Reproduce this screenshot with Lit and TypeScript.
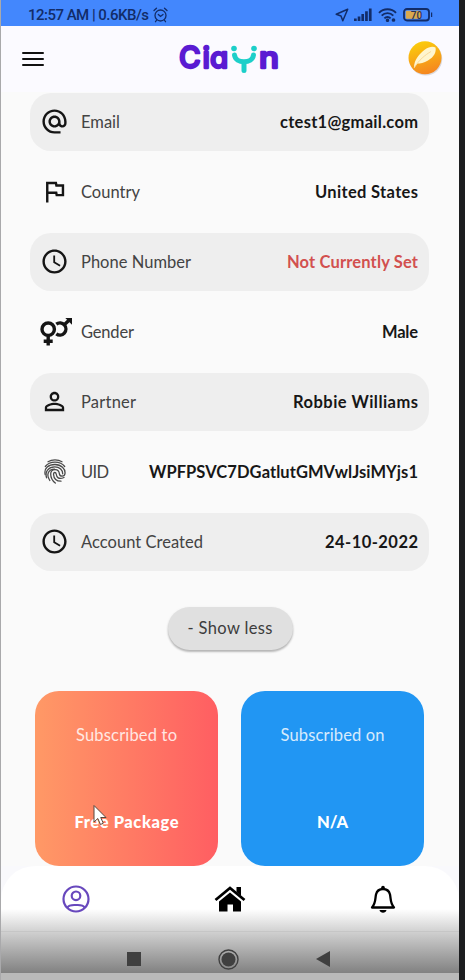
import { LitElement, html, css, svg } from "lit";
import { customElement } from "lit/decorators.js";

const icons: Record<string, unknown> = {
  at: svg`<svg class="row-icon" viewBox="0 0 24 24"><path d="M12 2C6.480 2 2 6.480 2 12s4.480 10 10 10h5v-2h-5c-4.340 0-8-3.660-8-8s3.660-8 8-8 8 3.660 8 8v1.430c0 .790-.710 1.570-1.500 1.570S17 14.220 17 13.430V12c0-2.760-2.240-5-5-5s-5 2.240-5 5 2.240 5 5 5c1.380 0 2.640-.560 3.540-1.470.650.890 1.770 1.470 2.960 1.470 1.970 0 3.500-1.600 3.500-3.570V12c0-5.520-4.480-10-10-10zm0 13c-1.660 0-3-1.340-3-3s1.340-3 3-3 3 1.340 3 3-1.340 3-3 3z"/></svg>`,
  flag: svg`<svg class="row-icon" viewBox="0 0 24 24"><path d="M12.360 6l.400 2H18v6h-3.360l-.400-2H7V6h5.360M14 4H5v17h2v-7h5.600l.400 2h7V6h-5.600L14 4z"/></svg>`,
  clock: svg`<svg class="row-icon" viewBox="0 0 24 24"><path d="M11.990 2C6.470 2 2 6.480 2 12s4.470 10 9.990 10C17.520 22 22 17.520 22 12S17.520 2 11.990 2zM12 20c-4.420 0-8-3.580-8-8s3.580-8 8-8 8 3.580 8 8-3.580 8-8 8zm.500-13H11v6l5.250 3.150.750-1.230-4.500-2.670z"/></svg>`,
  person: svg`<svg class="row-icon" viewBox="0 0 24 24"><path d="M12 5.900a2.100 2.100 0 1 1 0 4.200 2.100 2.100 0 0 1 0-4.200m0 9c2.970 0 6.100 1.460 6.100 2.100v1.100H5.900V17c0-.640 3.130-2.100 6.100-2.100M12 4C9.790 4 8 5.790 8 8s1.790 4 4 4 4-1.790 4-4-1.790-4-4-4zm0 9c-2.670 0-8 1.340-8 4v3h16v-3c0-2.660-5.330-4-8-4z"/></svg>`,
  gender: svg`<svg class="gender-icon" viewBox="0 0 32 28"><g fill="none" stroke="#151515" stroke-width="3.400"><circle cx="8.200" cy="11.200" r="6.200"/><path d="M8.200 17.500v10M3.700 23.300h9"/><path d="M16.300 6.200A6 6 0 1 1 16.300 15.800M24 7l4.500-4.200"/></g><path d="M25.300 0H32v6.700z" fill="#151515"/></svg>`,
  print: svg`<svg class="print-icon" viewBox="0 0 22 25"><g fill="none" stroke="#4a4a4a" stroke-width="1.300" stroke-linecap="round"><path d="M4 2.700C8 .300 14 .300 18 2.700M1.300 7.500C5.500 1.600 16.500 1.600 20.700 7.500"/><path d="M1.200 15.500C-.300 9 4.800 5.500 11 5.500s10.500 4.500 10 9c-.400 3.600-5.200 3.400-5.600.300-.600-6-8.700-5.300-8.700.200 0 4.200 1.700 6.800 4.600 9"/><path d="M2.600 18.800C.500 12 5 8 10.800 7.900c5 0 8 3.300 7.900 6.900"/><path d="M5.800 21.500C1.800 15.500 4.500 10.200 10.500 10.200M20 18.500c-5.500 2.500-7.400-.300-7.800-3.500-.300-2.200-2.800-1.900-2.700.200.300 4.700 3.300 7 7.500 7"/></g></svg>`,
};

interface Row { icon: string; label: string; lw: number; value: string; vw: number; alert?: boolean }

const rows: Row[] = [
  { icon: "at", label: "Email", lw: 39, value: "ctest1@gmail.com", vw: 138 },
  { icon: "flag", label: "Country", lw: 59, value: "United States", vw: 103 },
  { icon: "clock", label: "Phone Number", lw: 110, value: "Not Currently Set", vw: 131, alert: true },
  { icon: "gender", label: "Gender", lw: 53, value: "Male", vw: 36 },
  { icon: "person", label: "Partner", lw: 55, value: "Robbie Williams", vw: 125 },
  { icon: "print", label: "UID", lw: 28, value: "WPFPSVC7DGatlutGMVwlJsiMYjs1", vw: 269 },
  { icon: "clock", label: "Account Created", lw: 122, value: "24-10-2022", vw: 93 },
];

/** Text tracked so that it fills the given width in pixels. */
@customElement("tracked-text")
class TrackedText extends LitElement {
  static properties = { text: { type: String }, width: { type: Number } };
  declare text: string;
  declare width: number;
  static styles = css`
    :host { display: inline-block; white-space: pre; }
  `;
  render() { return html`<span>${this.text}</span>`; }
  updated() {
    const span = this.renderRoot.querySelector("span") as HTMLElement;
    span.style.letterSpacing = "0px";
    const gap = (this.width - span.getBoundingClientRect().width) / (this.text.length - 1);
    span.style.letterSpacing = gap + "px";
    span.style.marginRight = -gap + "px";
  }
}

@customElement("app-root")
class AppRoot extends LitElement {
  static styles = css`
    :host { display: block; font-family: Lato, "Open Sans", sans-serif; }
    * { box-sizing: border-box; }
    svg { display: block; flex: none; }
    .frame {
      position: relative; width: 465px; height: 980px; overflow: hidden;
      display: flex; flex-direction: column; background: #fafafa;
      border-left: 1px solid #a9a9ab; border-right: 6px solid #1c1d1f;
    }
    .status {
      height: 26px; flex: none; background: #4387fd; color: #122c68;
      display: flex; align-items: center; padding: 3px 26px 0 27px;
      font: 500 15px Roboto, sans-serif;
    }
    .status .alarm { margin-left: 4px; }
    .status .right { margin-left: auto; display: flex; align-items: center; }
    .signal { margin-left: 5px; } .wifi { margin-left: 6px; } .battery { margin-left: 6px; }
    header {
      height: 66px; flex: none; background: #fbfaff; display: flex;
      align-items: center; justify-content: space-between; padding: 0 16px 2px 21px;
    }
    .menu { width: 22px; display: grid; gap: 4px; padding-top: 2px; }
    .menu i { height: 2.200px; background: #111; border-radius: 1px; }
    .logo { margin-left: 11px; }
    .logo text { font-family: Inter, sans-serif; font-weight: 500; font-feature-settings: "cv11"; }
    .list { margin: 1px 30px 0 28.500px; display: grid; gap: 12px; }
    .row { height: 58px; border-radius: 21px; display: flex; align-items: center; padding: 0 11px 0 10.500px; }
    .row.shade { background: #eeeeee; }
    .slot { width: 41px; display: flex; align-items: center; padding-bottom: 1px; }
    .row-icon { width: 29px; height: 29px; fill: #151515; }
    .gender-icon { width: 32px; height: 28px; }
    .print-icon { width: 22px; height: 25px; margin-left: 4px; }
    .label { font-size: 16.500px; color: #434343; }
    .value { font-size: 16.500px; font-weight: 700; color: #171717; margin-left: auto; }
    .value.alert { color: #d2504f; }
    .more {
      align-self: center; flex: none; margin: 36px 0 0 0; width: 125px; height: 43px;
      border-radius: 22px; background: #e0e0e0; color: #3c3c3c; font-size: 16.500px;
      display: flex; align-items: center; justify-content: center; padding-bottom: 1px;
      box-shadow: 0 2px 2px rgba(0, 0, 0, .22), 0 1px 3px rgba(0, 0, 0, .1);
    }
    .cards { margin: 41px 35px 0 34px; display: flex; gap: 23px; }
    .card {
      flex: 1; height: 175px; border-radius: 24px; display: flex; flex-direction: column;
      align-items: center; justify-content: space-between; padding: 34px 0 34px;
      font-size: 16.500px; color: #fff;
    }
    .card.plan { background: linear-gradient(90deg, #ff9966, #ff5e62); }
    .card.date { background: #2196f3; }
    .card .cap { opacity: .82; }
    .card .big { font-weight: 900; }
    .bottom { flex: none; height: 107px; background: #f9f9fc; }
    .sheet {
      height: 107px; border-radius: 34px 34px 0 0;
      background: linear-gradient(to bottom, #fff 0, #fff 43px, #d0d0d0 66px, #818181 107px);
    }
    .tabs { height: 66px; display: grid; grid-template-columns: 1fr 1fr 1fr; place-items: center; border-bottom: 1px solid rgba(0,0,0,.05); }
    .tabs svg:first-child { margin-right: 2px; }
    .sys { height: 41px; display: flex; align-items: center; padding: 13px 129px 0 126px; justify-content: space-between; }
    .square { width: 14px; height: 14px; background: #404040; }
    .foot { height: 7px; background: #b9b9b9; }
    .cursor { position: absolute; left: 91px; top: 804px; }
  `;

  render() {
    return html`
      <div class="frame">
        <div class="status">
          <tracked-text text="12:57 AM | 0.6KB/s" width="121"></tracked-text>
          <svg class="alarm" width="15" height="16" viewBox="0 0 15 16" fill="none" stroke="#122c68" stroke-width="1.300" stroke-linecap="round"><circle cx="7.500" cy="8.500" r="5.500"/><path d="M1 3.500L3.500 1.200M14 3.500L11.500 1.200M5.300 7.500L7.500 9.500L10 7.500M3.700 13L2.500 14.700M11.300 13L12.500 14.700"/></svg>
          <div class="right">
            <svg width="14" height="14" viewBox="0 0 14 14" fill="none" stroke="#122c68" stroke-width="1.500" stroke-linejoin="round"><path d="M12.700 1.300L1.200 6.300L6 8L7.800 12.700z"/></svg>
            <svg class="signal" width="18" height="13" viewBox="0 0 18 13" fill="#122c68"><path d="M0 10.500h2.700V13H0zM3.700 8.500h2.700V13H3.700zM7.400 6H10v7H7.400zM11.100 3.200h2.700V13h-2.700zM14.900 .5h2.700v12.500h-2.700z"/></svg>
            <svg class="wifi" width="19" height="14" viewBox="0 0 19 14" fill="none" stroke="#122c68" stroke-width="1.900"><path d="M1 4.800c4.500-4.800 12.500-4.800 17 0M3.700 7.600c3.200-3.300 8.400-3.300 11.600 0M6.400 10.300c1.800-1.800 4.400-1.800 6.200 0"/><circle cx="9.500" cy="12.300" r=".8"/><circle cx="15.500" cy="12" r=".9"/></svg>
            <svg class="battery" width="30" height="14" viewBox="0 0 30 14"><rect x="1" y="1" width="25" height="11.500" rx="3" fill="none" stroke="#122c68" stroke-width="1.800"/><rect x="2.800" y="2.800" width="15" height="8" rx="1" fill="#d9a94e"/><path d="M28 4.500h1.200v4.500H28z" fill="#122c68"/><text x="13.500" y="10.500" font-family="Roboto" font-size="10" font-weight="500" text-anchor="middle" fill="#2c3350">70</text></svg>
          </div>
        </div>
        <header>
          <div class="menu"><i></i><i></i><i></i></div>
          <svg class="logo" width="104" height="46" viewBox="0 -6 104 46">
            <g fill="#5a1bd2" stroke="#5a1bd2" stroke-width="2.300" stroke-linejoin="round" stroke-linecap="round">
              <text x="0 23.500 31" y="26.500" font-size="29.500" font-weight="400">Cia</text>
              <text x="80" y="26.500" font-size="29.500" textLength="20" lengthAdjust="spacingAndGlyphs">n</text>
            </g>
            <g fill="none" stroke="#1ccfc9" stroke-width="5" stroke-linecap="round"><path d="M55.500 14C56.500 23 73.500 23 74.500 14M65 21v8.500"/></g>
            <circle cx="55" cy="7.500" r="2.800" fill="#1ccfc9"/><circle cx="75" cy="7.500" r="2.800" fill="#1ccfc9"/>
          </svg>
          <svg width="36" height="36" viewBox="0 0 36 36">
            <defs><linearGradient id="gold" x1=".2" y1="0" x2=".5" y2="1"><stop offset="0" stop-color="#fbd00b"/><stop offset="1" stop-color="#f5861f"/></linearGradient></defs>
            <circle cx="18.800" cy="19" r="16.500" fill="#000" opacity=".13"/><circle cx="18" cy="17.800" r="16.500" fill="url(#gold)"/>
            <path d="M7 28C7 20 12 14 18 9.500C22 6.500 26 6 28.500 7.500C29.500 12 27 17 21 20.500C17 23 13 23.500 10.500 23.500z" fill="#fff6cf"/><path d="M7 28C12 20 18 15 24 11.500" stroke="#f7d795" stroke-width=".9" fill="none"/>
          </svg>
        </header>
        <div class="list">
          ${rows.map((r, i) => html`
            <div class="row ${i % 2 ? "" : "shade"}">
              <div class="slot">${icons[r.icon]}</div>
              <tracked-text class="label" text=${r.label} width=${r.lw}></tracked-text>
              <tracked-text class="value ${r.alert ? "alert" : ""}" text=${r.value} width=${r.vw}></tracked-text>
            </div>`)}
        </div>
        <div class="more"><tracked-text text="- Show less" width="85"></tracked-text></div>
        <div class="cards">
          <div class="card plan">
            <tracked-text class="cap" text="Subscribed to" width="101"></tracked-text>
            <tracked-text class="big" text="Free Package" width="104"></tracked-text>
          </div>
          <div class="card date">
            <tracked-text class="cap" text="Subscribed on" width="104"></tracked-text>
            <tracked-text class="big" text="N/A" width="31"></tracked-text>
          </div>
        </div>
        <div class="bottom">
          <div class="sheet">
            <div class="tabs">
              <svg width="28" height="28" viewBox="0 0 28 28" fill="none" stroke="#6848bd" stroke-width="2.200"><circle cx="14" cy="14" r="12.500"/><circle cx="14" cy="10.800" r="4.300"/><path d="M5.500 22.500c1.500-3 5-2.500 8.500-2.500s7-.5 8.500 2.500"/></svg>
              <svg width="32" height="26" viewBox="0 0 32 26"><path d="M16 6.500L27 15.500V25.500H19V18.500H13.500V25.500H5V15.500z"/><path d="M1.500 14L16 2L30.500 14" fill="none" stroke="#000" stroke-width="2.800"/><path d="M22.500 1h4.500v9l-4.500-4z"/></svg>
              <svg width="26" height="28" viewBox="0 0 26 28"><path d="M2 22.500C6 18 5 14 6 9.500C7 5.500 10 4 13 4s6 1.500 7 5.500C21 14 20 18 24 22.500z" fill="none" stroke="#000" stroke-width="2.300" stroke-linejoin="round"/><circle cx="13" cy="2.500" r="1.800"/><path d="M9.500 25h7c-.500 3.500-6.500 3.500-7 0z"/></svg>
            </div>
            <div class="sys">
              <div class="square"></div>
              <svg width="21" height="21" viewBox="0 0 21 21"><circle cx="10.500" cy="10.500" r="9.500" fill="none" stroke="#404040" stroke-width="1.400"/><circle cx="10.500" cy="10.500" r="7" fill="#404040"/></svg>
              <svg width="14" height="16" viewBox="0 0 14 16"><path d="M0 8L14 0v16z" fill="#404040"/></svg>
            </div>
          </div>
        </div>
        <div class="foot"></div>
        <svg class="cursor" width="16" height="22" viewBox="0 0 16 22"><path d="M2 1.500V18l3.800-3.500L8.500 20.500l2.800-1.300L8.700 13.500h5.300z" fill="#fff" stroke="#59483f" stroke-width="1"/></svg>
      </div>`;
  }
}
